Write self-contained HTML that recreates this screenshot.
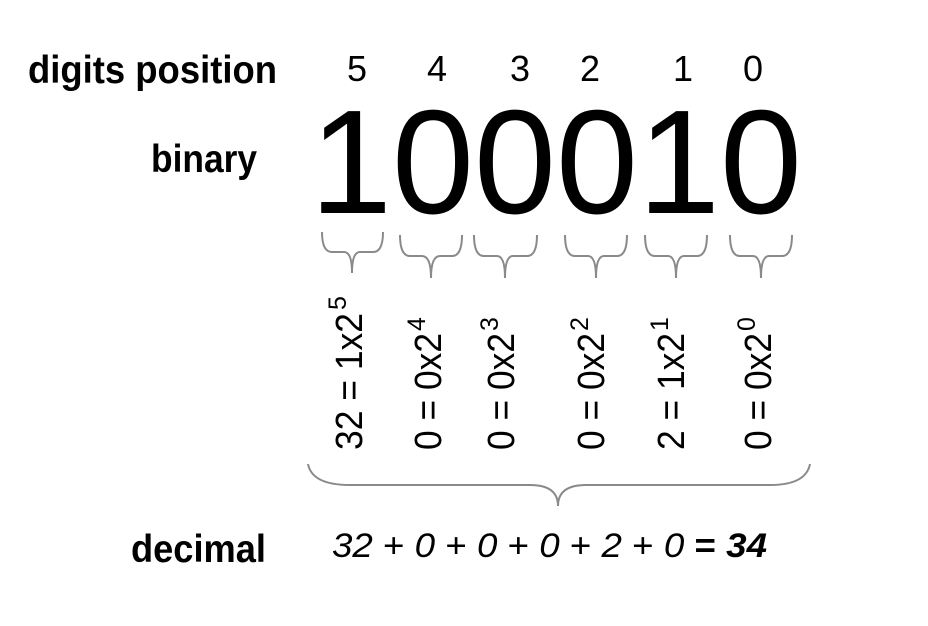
<!DOCTYPE html>
<html><head><meta charset="utf-8"><style>
html,body{margin:0;padding:0;background:#fff;}
svg{display:block;font-family:"Liberation Sans",Arial,sans-serif;}
</style></head><body>
<svg width="928" height="626" viewBox="0 0 928 626" xmlns="http://www.w3.org/2000/svg">
<rect width="928" height="626" fill="#fff"/>
<g font-weight="bold" fill="#000">
<text x="28" y="83" font-size="39" textLength="249" lengthAdjust="spacingAndGlyphs">digits  position</text>
<text x="151" y="172" font-size="39" textLength="106" lengthAdjust="spacingAndGlyphs">binary</text>
<text x="131" y="562" font-size="39" textLength="135" lengthAdjust="spacingAndGlyphs">decimal</text>
</g>
<g font-size="36" text-anchor="middle" fill="#000">
<text x="357" y="81">5</text><text x="437" y="81">4</text><text x="520" y="81">3</text>
<text x="590" y="81">2</text><text x="683" y="81">1</text><text x="753" y="81">0</text>
</g>
<text x="310" y="213" font-size="148" fill="#000" textLength="492" lengthAdjust="spacingAndGlyphs">100010</text>
<g fill="none" stroke="#8a8a8a" stroke-width="2">
<path d="M322 232 Q322 252 332 252 L344 252 Q352 252 352 273 Q352 252 360 252 L373 252 Q383 252 383 232"/>
<path d="M400 235 Q400 256 410 256 L422 256 Q431 256 431 278 Q431 256 440 256 L452 256 Q462 256 462 235"/>
<path d="M474 235 Q474 256 484 256 L497 256 Q505 256 505 278 Q505 256 513 256 L527 256 Q537 256 537 235"/>
<path d="M565 235 Q565 256 575 256 L588 256 Q596 256 596 278 Q596 256 604 256 L617 256 Q627 256 627 235"/>
<path d="M645 235 Q645 256 655 256 L668 256 Q676 256 676 278 Q676 256 684 256 L697 256 Q707 256 707 235"/>
<path d="M730 235 Q730 256 740 256 L753 256 Q761 256 761 278 Q761 256 769 256 L782 256 Q792 256 792 235"/>
<path d="M308 464 Q312 485 350 485 L530 485 Q558 485 558 506 Q558 485 586 485 L770 485 Q806 485 810 464"/>
</g>
<g font-size="38" fill="#000">
<g transform="translate(362,450) rotate(-90)"><text x="0" y="0" textLength="137" lengthAdjust="spacingAndGlyphs">32 = 1x2</text><text x="140" y="-16" font-size="25">5</text></g>
<g transform="translate(441,450) rotate(-90)"><text x="0" y="0" textLength="117" lengthAdjust="spacingAndGlyphs">0 = 0x2</text><text x="119" y="-16" font-size="25">4</text></g>
<g transform="translate(514,450) rotate(-90)"><text x="0" y="0" textLength="117" lengthAdjust="spacingAndGlyphs">0 = 0x2</text><text x="119" y="-16" font-size="25">3</text></g>
<g transform="translate(604,450) rotate(-90)"><text x="0" y="0" textLength="117" lengthAdjust="spacingAndGlyphs">0 = 0x2</text><text x="119" y="-16" font-size="25">2</text></g>
<g transform="translate(684,450) rotate(-90)"><text x="0" y="0" textLength="117" lengthAdjust="spacingAndGlyphs">2 = 1x2</text><text x="119" y="-16" font-size="25">1</text></g>
<g transform="translate(771,450) rotate(-90)"><text x="0" y="0" textLength="117" lengthAdjust="spacingAndGlyphs">0 = 0x2</text><text x="119" y="-16" font-size="25">0</text></g>
</g>
<text x="332" y="557" font-size="34" font-style="italic" fill="#000" textLength="435" lengthAdjust="spacingAndGlyphs">32 <tspan font-style="normal">+</tspan> 0 <tspan font-style="normal">+</tspan> 0 <tspan font-style="normal">+</tspan> 0 <tspan font-style="normal">+</tspan> 2 <tspan font-style="normal">+</tspan> 0 <tspan font-style="normal" font-weight="bold">=</tspan> <tspan font-weight="bold">34</tspan></text>
</svg>
</body></html>
